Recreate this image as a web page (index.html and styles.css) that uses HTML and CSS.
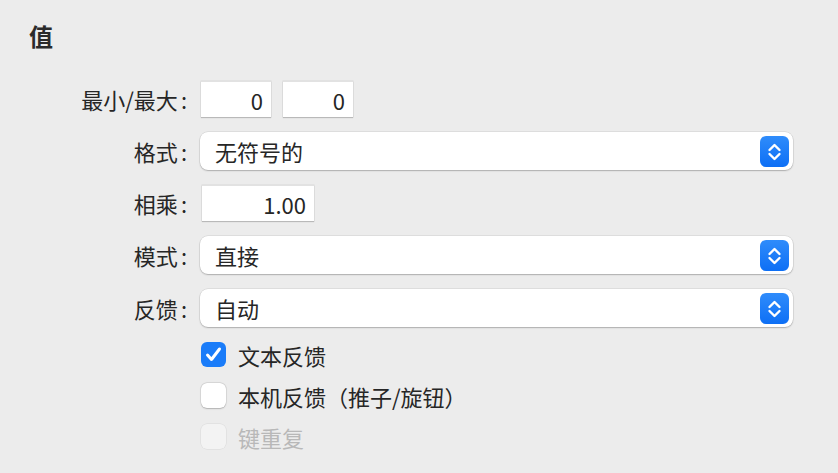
FILE: index.html
```html
<!DOCTYPE html>
<html lang="zh-CN">

<head>
    <meta charset="UTF-8">
    <title>值</title>
    <link rel="stylesheet" href="styles.css">
</head>

<body>
    <div class="panel">
        <h3 class="title">值</h3>

        <div class="form">
            <label class="label">最小/最大<span class="colon">:</span></label>
            <div class="control pair">
                <input class="field field-small" type="text" value="0">
                <input class="field field-small" type="text" value="0">
            </div>

            <label class="label">格式<span class="colon">:</span></label>
            <div class="control">
                <div class="popup">
                    <span>无符号的</span>
                    <span class="stepper">
                        <svg width="29" height="31" viewBox="0 0 29 31">
                            <path d="M9.5 14 L14.5 9 L19.5 14" />
                            <path d="M9.5 18 L14.5 23 L19.5 18" />
                        </svg>
                    </span>
                </div>
            </div>

            <label class="label">相乘<span class="colon">:</span></label>
            <div class="control">
                <input class="field field-wide" type="text" value="1.00">
            </div>

            <label class="label">模式<span class="colon">:</span></label>
            <div class="control">
                <div class="popup">
                    <span>直接</span>
                    <span class="stepper">
                        <svg width="29" height="31" viewBox="0 0 29 31">
                            <path d="M9.5 14 L14.5 9 L19.5 14" />
                            <path d="M9.5 18 L14.5 23 L19.5 18" />
                        </svg>
                    </span>
                </div>
            </div>

            <label class="label">反馈<span class="colon">:</span></label>
            <div class="control">
                <div class="popup">
                    <span>自动</span>
                    <span class="stepper">
                        <svg width="29" height="31" viewBox="0 0 29 31">
                            <path d="M9.5 14 L14.5 9 L19.5 14" />
                            <path d="M9.5 18 L14.5 23 L19.5 18" />
                        </svg>
                    </span>
                </div>
            </div>
        </div>

        <div class="checks">
            <div class="check">
                <span class="box box-on">
                    <svg width="25" height="25" viewBox="0 0 25 25">
                        <path d="M6.5 13 L10.5 17.5 L18.5 7" />
                    </svg>
                </span>
                <span>文本反馈</span>
            </div>
            <div class="check">
                <span class="box"></span>
                <span>本机反馈（推子/旋钮）</span>
            </div>
            <div class="check check-disabled">
                <span class="box"></span>
                <span>键重复</span>
            </div>
        </div>
    </div>
</body>

</html>
```

FILE: styles.css
```css
body {
    margin: 0;
    background-color: #ececec;
    font-family: "Noto Sans CJK SC", "Noto Sans", sans-serif;
    color: #262626;
}

.panel {
    padding: 21px 45px 0 29px;
    height: 473px;
    box-sizing: border-box;
}

.title {
    margin: 0;
    font-size: 24px;
    line-height: 30px;
    font-weight: 600;
    color: #2a2a2a;
}

.form {
    margin-top: 30px;
    display: grid;
    grid-template-columns: 161px 1fr;
    column-gap: 10px;
    row-gap: 15px;
    align-items: center;
}

.label {
    text-align: right;
    font-size: 22px;
    line-height: 28px;
    padding-right: 3px;
    white-space: nowrap;
}

.colon {
    margin-left: 3px;
}

.control {
    display: flex;
    align-items: center;
}

.pair {
    gap: 11px;
}

.field {
    height: 36px;
    box-sizing: border-box;
    border: none;
    border-top: 1px solid #e2e2e2;
    background: #fff;
    box-shadow: 0 1px 1px rgba(0, 0, 0, 0.18), 0 0 0 0.5px rgba(0, 0, 0, 0.08);
    text-align: right;
    padding: 0 8px;
    font-family: inherit;
    font-size: 22px;
    color: #262626;
    margin-left: 1px;
}

.field-small {
    width: 70px;
}

.field-wide {
    width: 112px;
    margin-left: 2px;
}

.popup {
    flex: 1;
    height: 38px;
    box-sizing: border-box;
    background: #fff;
    border-radius: 8px;
    box-shadow: 0 1px 1.5px rgba(0, 0, 0, 0.22), 0 0 0 0.5px rgba(0, 0, 0, 0.12);
    display: flex;
    align-items: center;
    justify-content: space-between;
    padding: 0 4px 0 15px;
    font-size: 22px;
}

.stepper {
    width: 29px;
    height: 31px;
    border-radius: 6px;
    background: linear-gradient(#2f8cfb, #0d6ff5);
    display: flex;
}

.stepper path {
    fill: none;
    stroke: #fff;
    stroke-width: 2.4;
    stroke-linecap: round;
    stroke-linejoin: round;
}

.checks {
    margin-top: 15px;
    margin-left: 172px;
    display: flex;
    flex-direction: column;
    gap: 16px;
}

.check {
    display: flex;
    align-items: center;
    gap: 12px;
    height: 25px;
    font-size: 22px;
}

.box {
    width: 25px;
    height: 25px;
    box-sizing: border-box;
    border-radius: 6px;
    background: #fff;
    box-shadow: 0 0.5px 1.5px rgba(0, 0, 0, 0.2), 0 0 0 0.5px rgba(0, 0, 0, 0.12);
    display: flex;
}

.box-on {
    background: #1a7cf9;
    box-shadow: none;
}

.box-on path {
    fill: none;
    stroke: #fff;
    stroke-width: 3;
    stroke-linecap: round;
    stroke-linejoin: round;
}

.check-disabled {
    color: #b8b8b8;
}

.check-disabled .box {
    background: #f3f3f3;
    box-shadow: 0 0 0 0.5px rgba(0, 0, 0, 0.08);
}
```
